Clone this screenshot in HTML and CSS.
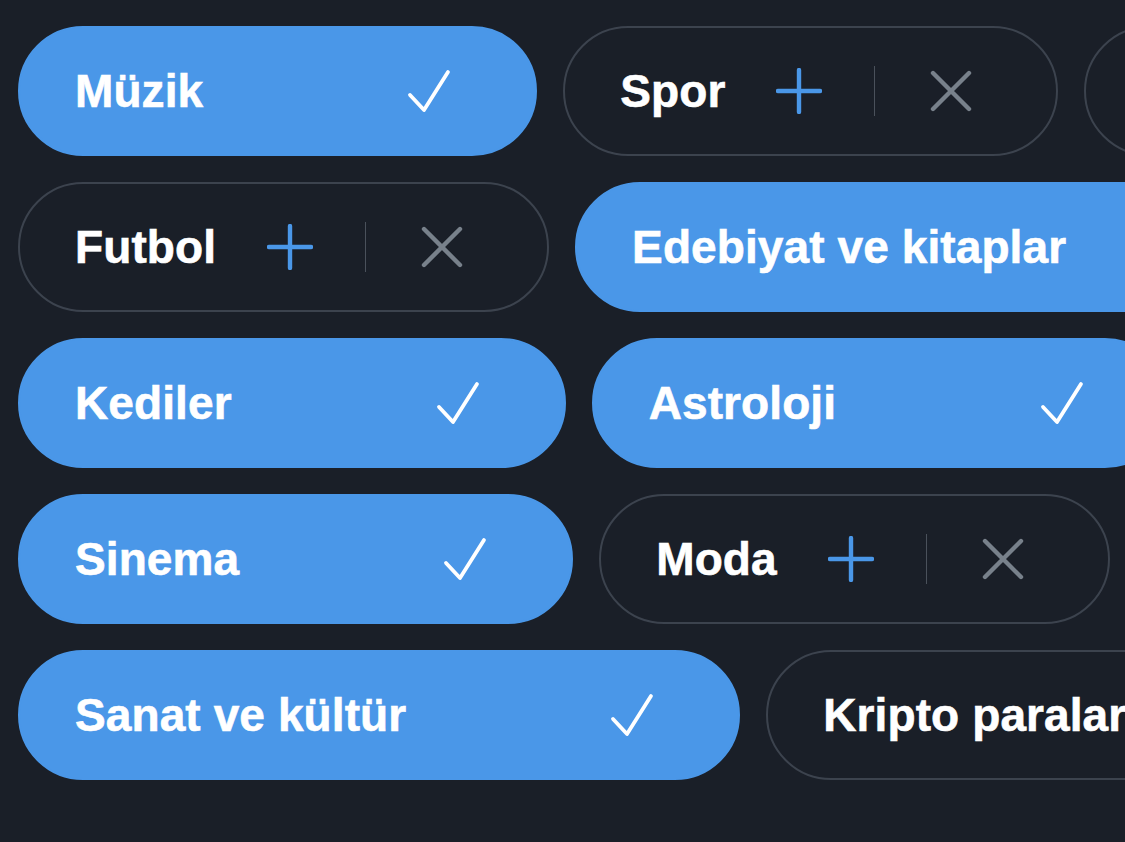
FILE: index.html
```html
<!DOCTYPE html>
<html lang="tr">
<head>
<meta charset="utf-8">
<title>Konular</title>
<link rel="stylesheet" href="styles.css">
</head>
<body>
<div class="board">
  <div class="row">
    <div class="pill on"><span class="label">Müzik</span><svg class="check" viewBox="0 0 44 44"><path d="M3 26 L17 41 L41 3"/></svg></div>
    <div class="pill off"><span class="label">Spor</span><svg class="plus" viewBox="0 0 46 46"><path d="M23 2 V44 M2 23 H44"/></svg><span class="sep"></span><svg class="cross" viewBox="0 0 42 42"><path d="M3 3 L39 39 M39 3 L3 39"/></svg></div>
    <div class="pill off blank"></div>
  </div>
  <div class="row">
    <div class="pill off"><span class="label">Futbol</span><svg class="plus" viewBox="0 0 46 46"><path d="M23 2 V44 M2 23 H44"/></svg><span class="sep"></span><svg class="cross" viewBox="0 0 42 42"><path d="M3 3 L39 39 M39 3 L3 39"/></svg></div>
    <div class="pill on"><span class="label">Edebiyat ve kitaplar</span><svg class="check" viewBox="0 0 44 44"><path d="M3 26 L17 41 L41 3"/></svg></div>
  </div>
  <div class="row">
    <div class="pill on"><span class="label">Kediler</span><svg class="check" viewBox="0 0 44 44"><path d="M3 26 L17 41 L41 3"/></svg></div>
    <div class="pill on"><span class="label">Astroloji</span><svg class="check" viewBox="0 0 44 44"><path d="M3 26 L17 41 L41 3"/></svg></div>
  </div>
  <div class="row">
    <div class="pill on"><span class="label">Sinema</span><svg class="check" viewBox="0 0 44 44"><path d="M3 26 L17 41 L41 3"/></svg></div>
    <div class="pill off"><span class="label">Moda</span><svg class="plus" viewBox="0 0 46 46"><path d="M23 2 V44 M2 23 H44"/></svg><span class="sep"></span><svg class="cross" viewBox="0 0 42 42"><path d="M3 3 L39 39 M39 3 L3 39"/></svg></div>
  </div>
  <div class="row">
    <div class="pill on"><span class="label">Sanat ve kültür</span><svg class="check" viewBox="0 0 44 44"><path d="M3 26 L17 41 L41 3"/></svg></div>
    <div class="pill off"><span class="label">Kripto paralar</span><svg class="plus" viewBox="0 0 46 46"><path d="M23 2 V44 M2 23 H44"/></svg><span class="sep"></span><svg class="cross" viewBox="0 0 42 42"><path d="M3 3 L39 39 M39 3 L3 39"/></svg></div>
  </div>
</div>
</body>
</html>
```

FILE: styles.css
```css
html, body {
  margin: 0;
  padding: 0;
  background: #1a1f28;
  width: 1125px;
  height: 842px;
  overflow: hidden;
}

.board {
  display: flex;
  flex-direction: column;
  gap: 26px;
  padding: 26px 0 0 18px;
}

.row {
  display: flex;
  flex-wrap: nowrap;
  gap: 26px;
}

.pill {
  flex: 0 0 auto;
  box-sizing: border-box;
  height: 130px;
  border-radius: 65px;
  display: flex;
  align-items: center;
  padding: 0 84px 0 55px;
  border: 2px solid transparent;
  font-family: "Liberation Sans", Arial, sans-serif;
  font-weight: 700;
  font-size: 46px;
  color: #ffffff;
  white-space: nowrap;
}

.pill.on {
  background: #4a97e8;
  border-color: #4a97e8;
}

.pill.off {
  background: #1a1f28;
  border-color: #3c434e;
}

.pill.blank {
  width: 300px;
}

.label {
  line-height: 1;
  letter-spacing: 0.1px;
  -webkit-text-stroke: 0.6px #ffffff;
}

.check {
  width: 44px;
  height: 44px;
  margin-left: 204px;
  fill: none;
  stroke: #ffffff;
  stroke-width: 3.8;
  stroke-linecap: round;
  stroke-linejoin: round;
}

.plus {
  width: 46px;
  height: 46px;
  margin-left: 51px;
  fill: none;
  stroke: #4a97e8;
  stroke-width: 4.4;
  stroke-linecap: round;
}

.sep {
  width: 1px;
  height: 50px;
  background: #4a515b;
  margin: 0 55px 0 52px;
}

.cross {
  width: 42px;
  height: 42px;
  fill: none;
  stroke: #78818b;
  stroke-width: 4.4;
  stroke-linecap: round;
}
```
